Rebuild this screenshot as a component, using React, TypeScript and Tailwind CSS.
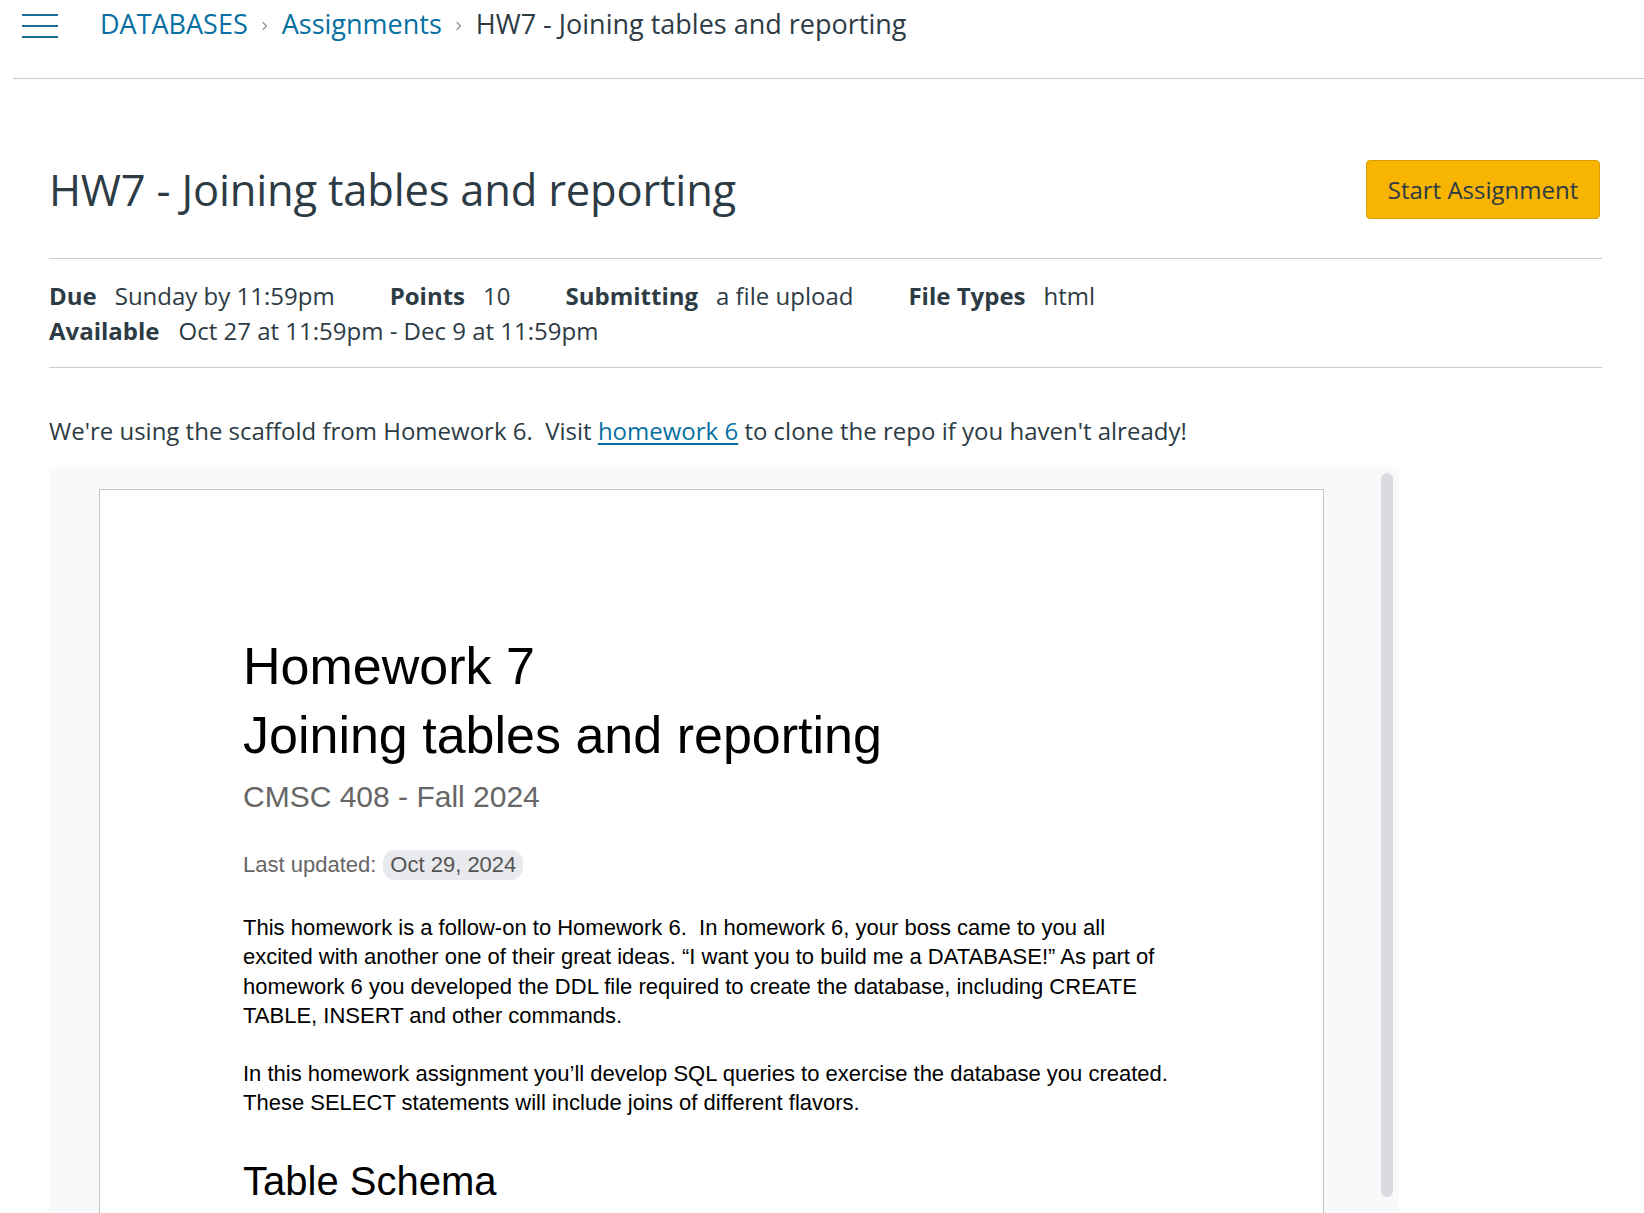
import React from "react";

const Chevron = () => (
  <svg width="10" height="14" viewBox="0 0 10 14" className="mx-[12px] mt-[5px]" fill="none">
    <path d="M3 3.5 L6.5 7 L3 10.5" stroke="#8b969e" strokeWidth="1.3" strokeLinecap="round" strokeLinejoin="round" />
  </svg>
);

export default function App() {
  return (
    <div className="h-[1213px] overflow-hidden bg-white font-['Open_Sans',sans-serif] text-[#2d3b45]">
      {/* Header */}
      <div className="ml-[13px] h-[79px] border-b border-[#c7cdd1]">
        <div className="flex h-[52px] items-center pl-[9px]">
          <div className="flex w-[36px] flex-col gap-[9px]">
            <div className="h-[2px] bg-[#1a6e99]" />
            <div className="h-[2px] bg-[#1a6e99]" />
            <div className="h-[2px] bg-[#1a6e99]" />
          </div>
          <nav className="ml-[42px] flex items-center pb-[6px] text-[27px] leading-none">
            <span className="text-[#0770a3]">DATABASES</span>
            <Chevron />
            <span className="text-[#0770a3]">Assignments</span>
            <Chevron />
            <span className="text-[#2d3b45]">HW7 - Joining tables and reporting</span>
          </nav>
        </div>
      </div>

      <div className="pl-[49px] pr-[42px]">
        {/* Title */}
        <div className="mt-[81px] flex items-center justify-between border-b border-[#c7cdd1] pb-[39px]">
          <h1 className="text-[43.5px] font-normal leading-none tracking-[-0.2px]">HW7 - Joining tables and reporting</h1>
          <button className="mr-[2px] flex h-[59px] w-[234px] items-center justify-center rounded-[4px] border border-[#d8a000] bg-[#f7b400] text-[24px] text-[#2d3b45]">
            Start Assignment
          </button>
        </div>

        {/* Details */}
        <div className="border-b border-[#c7cdd1] pb-[19px] pt-[19px] text-[24px] leading-[35px]">
          <div className="flex">
            <div className="mr-[55px] flex">
              <span className="mr-[18px] font-bold">Due</span>
              <span>Sunday by 11:59pm</span>
            </div>
            <div className="mr-[55px] flex">
              <span className="mr-[18px] font-bold">Points</span>
              <span>10</span>
            </div>
            <div className="mr-[55px] flex">
              <span className="mr-[18px] font-bold">Submitting</span>
              <span>a file upload</span>
            </div>
            <div className="flex">
              <span className="mr-[18px] font-bold">File Types</span>
              <span>html</span>
            </div>
          </div>
          <div className="flex">
            <span className="mr-[19px] font-bold">Available</span>
            <span>Oct 27 at 11:59pm - Dec 9 at 11:59pm</span>
          </div>
        </div>

        {/* Description */}
        <p className="mt-[47px] text-[24px] leading-[32px]">
          We're using the scaffold from Homework 6.&nbsp; Visit{" "}
          <a className="text-[#0770a3] underline underline-offset-[3px]">homework 6</a> to clone the repo if you haven't already!
        </p>

        {/* Embedded document viewer */}
        <div className="mt-[20px] flex h-[800px] w-[1350px] items-start bg-[#f8f9fa]">
          <div className="ml-[50px] mt-[22px] h-[900px] w-[1225px] border border-[#c4c4c4] bg-white font-['Liberation_Sans',Arial,sans-serif] text-black">
            <div className="w-[1078px] pl-[143px] pt-[142px]">
              <div className="w-[930px]">
                <h1 className="text-[52px] font-normal leading-[69px]">
                  Homework 7
                  <br />
                  Joining tables and reporting
                </h1>
                <div className="mt-[9px] text-[30px] leading-[36px] text-[#666666]">CMSC 408 - Fall 2024</div>
                <div className="mt-[35px] flex items-center text-[22px] leading-[30px] text-[#666666]">
                  <span>Last updated:</span>
                  <span className="ml-[7px] rounded-[12px] bg-[#e9eaee] px-[7px] text-[#555555]">Oct 29, 2024</span>
                </div>
                <p className="mt-[33px] text-[22px] leading-[29.4px]">
                  This homework is a follow-on to Homework 6.&nbsp; In homework 6, your boss came to you all excited with another one of
                  their great ideas. “I want you to build me a DATABASE!” As part of homework 6 you developed the DDL file required to
                  create the database, including CREATE TABLE, INSERT and other commands.
                </p>
                <p className="mt-[28px] text-[22px] leading-[29.4px]">
                  In this homework assignment you’ll develop SQL queries to exercise the database you created. These SELECT statements
                  will include joins of different flavors.
                </p>
                <h2 className="mt-[41px] text-[40px] font-normal leading-[47px]">Table Schema</h2>
              </div>
            </div>
          </div>
          <div className="ml-[57px] mt-[6px] h-[724px] w-[12px] rounded-full bg-[#dadbdf]" />
        </div>
      </div>
    </div>
  );
}
